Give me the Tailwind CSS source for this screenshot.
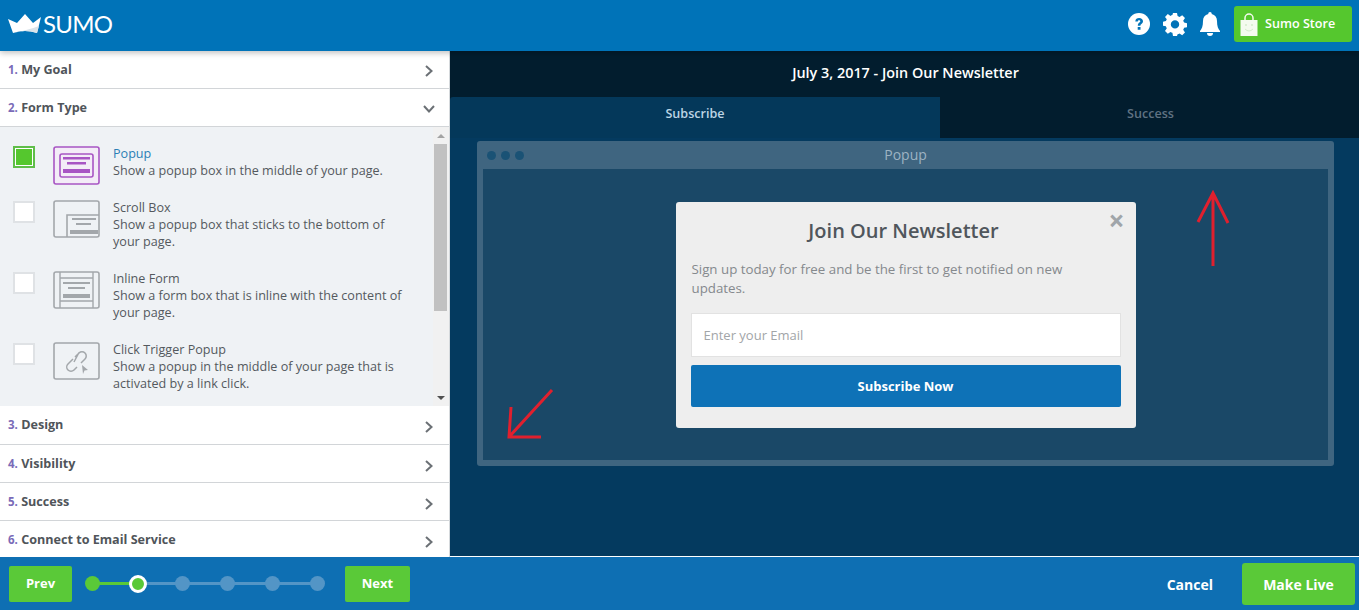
<!DOCTYPE html>
<html lang="en">
<head>
  <meta charset="UTF-8" />
  <title>Sumo - Form Type</title>
  <script src="https://cdn.jsdelivr.net/npm/@tailwindcss/browser@4"></script>
</head>
<body class="w-[1359px] h-[611px] overflow-hidden bg-white font-['Open_Sans',sans-serif]">

  <!-- Header -->
  <header class="relative z-10 h-[51px] bg-[#0073b8] flex items-center justify-between shadow-[0_2px_6px_rgba(0,0,0,0.25)]">
    <div class="flex items-center pl-[8px] -mt-[3px]">
      <svg width="34" height="20" viewBox="0 0 34 20">
        <path d="M0 5 L9 9 L17 0 L25 9 L33 3 L29 19 Q17 15 5 19 Z" fill="#ffffff"/>
        <path d="M5 19 Q17 15 29 19 L31 12 Q20 16 5 19 Z" fill="#d9e3ea"/>
      </svg>
      <span class="ml-[1px] text-[24px] leading-none text-white tracking-[-0.7px] font-['Lato',sans-serif]">SUMO</span>
    </div>
    <div class="flex items-center pr-[7px] -mt-[3px]">
      <svg width="24" height="24" viewBox="0 0 24 24" class="mr-[12px]">
        <circle cx="12" cy="12" r="11" fill="#fff"/>
        <path d="M8.3 9.4 C8.5 7 10 6 12.1 6 C14.4 6 16 7.3 16 9.2 C16 11.6 13.4 11.8 13.4 13.8 L10.8 13.8 C10.8 10.8 13.3 10.6 13.3 9.3 C13.3 8.6 12.8 8.2 12.1 8.2 C11.3 8.2 10.9 8.7 10.8 9.6 Z M10.7 15 H13.5 V17.8 H10.7 Z" fill="#0073b8"/>
      </svg>
      <svg width="24" height="24" viewBox="0 0 24 24" class="mr-[12px]">
        <path fill="#fff" fill-rule="evenodd" d="M10 1 h4 l.6 3.1 c.7.2 1.3.5 1.9.9 l2.7-1.8 2.8 2.8-1.8 2.7c.4.6.7 1.2.9 1.9 l3 .6 v4 l-3 .6c-.2.7-.5 1.3-.9 1.9 l1.8 2.7-2.8 2.8-2.7-1.8c-.6.4-1.2.7-1.9.9 L14 23.9 h-4 l-.6-3.1c-.7-.2-1.3-.5-1.9-.9 l-2.7 1.8-2.8-2.8 1.8-2.7c-.4-.6-.7-1.2-.9-1.9 l-3-.6 v-4 l3-.6c.2-.7.5-1.3.9-1.9 L2 4.9 4.8 2.1 7.5 3.9c.6-.4 1.2-.7 1.9-.9 Z M12 8.2 a4.2 4.2 0 1 0 0 8.4 a4.2 4.2 0 0 0 0-8.4 Z"/>
      </svg>
      <svg width="22" height="24" viewBox="0 0 22 24" class="mr-[13px]">
        <path fill="#fff" d="M11 0 a1.7 1.7 0 0 1 1.7 1.9 C16.2 2.7 18 5.4 18 9 c0 5.2 1.2 8 3 10 v1 H1 v-1 c1.8-2 3-4.8 3-10 0-3.6 1.8-6.3 5.3-7.1 A1.7 1.7 0 0 1 11 0 Z M8 21 h6 a3 3 0 0 1-6 0 Z"/>
      </svg>
      <button class="w-[118px] h-[36px] bg-[#55c72e] rounded-[3px] flex items-center pl-[6px] text-white text-[12.6px] font-semibold">
        <svg width="18" height="24" viewBox="0 0 18 24" class="mr-[7px] mt-[2px]">
          <path d="M5 8 V5 a4 4 0 0 1 8 0 V8" fill="none" stroke="#f4fbef" stroke-width="1.5"/>
          <path d="M0.5 7 H17.5 V23 H0.5 Z" fill="#f4fbef"/>
          <circle cx="6" cy="12" r="1" fill="#d5eccb"/><circle cx="12" cy="12" r="1" fill="#d5eccb"/>
          <path d="M5 16 Q9 20 13 16" fill="none" stroke="#d5eccb" stroke-width="1"/>
        </svg>
        Sumo Store
      </button>
    </div>
  </header>

  <div class="flex h-[506px]">
    <!-- Sidebar -->
    <aside class="w-[450px] shrink-0 bg-white border-r border-[#d5d9dc] text-[#50555a]">
      <div class="h-[38px] border-b border-[#d2d5d8] flex items-center justify-between pl-[8px] pr-[15px]">
        <span class="text-[12.6px] font-bold mt-[1px]"><span class="text-[#7a6bb8] text-[11.5px]">1.</span> My Goal</span>
        <svg width="10" height="14" viewBox="0 0 10 14" class="mt-[3px]"><path d="M2 2 L7.5 7 L2 12" fill="none" stroke="#6b7075" stroke-width="2"/></svg>
      </div>
      <div class="h-[38px] border-b border-[#d2d5d8] flex items-center justify-between pl-[8px] pr-[13px]">
        <span class="text-[12.6px] font-bold mt-[1px]"><span class="text-[#7a6bb8] text-[11.5px]">2.</span> Form Type</span>
        <svg width="14" height="10" viewBox="0 0 14 10" class="mt-[3px]"><path d="M2 2 L7 7.5 L12 2" fill="none" stroke="#6b7075" stroke-width="2"/></svg>
      </div>

      <!-- Form type list -->
      <div class="relative h-[279px] bg-[#eff2f5] text-[12.6px] leading-[17px] text-[#54595e]">
        <div class="flex h-[54px] pt-[19px] box-content">
          <div class="ml-[13px] w-[22px] h-[22px] border-2 border-[#5fbe49] bg-[#55c72e] outline outline-1 -outline-offset-[3px] outline-white"></div>
          <svg width="48" height="40" viewBox="0 0 48 40" class="ml-[18px]">
            <rect x="1" y="1" width="45" height="37" rx="2" fill="#f3ecf7" stroke="#a855c4" stroke-width="1.6"/>
            <rect x="7" y="8" width="33" height="23" rx="2" fill="none" stroke="#a855c4" stroke-width="1.6"/>
            <rect x="10" y="11" width="27" height="2.5" fill="#a855c4"/><rect x="14" y="16" width="19" height="2.5" fill="#a855c4"/><rect x="10" y="23" width="27" height="4" fill="#a855c4"/>
          </svg>
          <div class="ml-[12px] -mt-[1px]"><p class="text-[#2b7fb5]">Popup</p><p>Show a popup box in the middle of your page.</p></div>
        </div>
        <div class="flex mt-0 h-[71px]">
          <div class="ml-[13px] mt-[1px] w-[22px] h-[22px] border-2 border-[#dfe2e5] bg-white"></div>
          <svg width="48" height="40" viewBox="0 0 48 40" class="ml-[18px]">
            <rect x="1" y="1" width="45" height="36" rx="2" fill="none" stroke="#a3a7ab" stroke-width="1.6"/>
            <path d="M14 37 V15 H46" fill="none" stroke="#a3a7ab" stroke-width="1.6"/>
            <rect x="19" y="18" width="24" height="2" fill="#a3a7ab"/><rect x="23" y="23" width="15" height="2" fill="#a3a7ab"/><rect x="17" y="30" width="28" height="4" fill="#a3a7ab"/>
          </svg>
          <div class="ml-[12px] w-[292px] -mt-[1px]"><p>Scroll Box</p><p>Show a popup box that sticks to the bottom of your page.</p></div>
        </div>
        <div class="flex h-[71px]">
          <div class="ml-[13px] mt-[1px] w-[22px] h-[22px] border-2 border-[#dfe2e5] bg-white"></div>
          <svg width="48" height="40" viewBox="0 0 48 40" class="ml-[18px]">
            <rect x="1" y="1" width="45" height="36" rx="2" fill="none" stroke="#a3a7ab" stroke-width="1.6"/>
            <path d="M7 1 V37 M40 1 V37 M7 7 H40 M7 30 H40" fill="none" stroke="#a3a7ab" stroke-width="1.4"/>
            <rect x="10" y="11" width="27" height="2" fill="#a3a7ab"/><rect x="15" y="16" width="17" height="2" fill="#a3a7ab"/><rect x="10" y="23" width="27" height="4" fill="#a3a7ab"/>
          </svg>
          <div class="ml-[12px] w-[292px] -mt-[1px]"><p>Inline Form</p><p>Show a form box that is inline with the content of your page.</p></div>
        </div>
        <div class="flex h-[63px]">
          <div class="ml-[13px] mt-[1px] w-[22px] h-[22px] border-2 border-[#dfe2e5] bg-white"></div>
          <svg width="48" height="40" viewBox="0 0 48 40" class="ml-[18px]">
            <rect x="1" y="1" width="45" height="36" rx="2" fill="none" stroke="#a3a7ab" stroke-width="1.6"/>
            <path d="M20 17 L15 22 a4 4 0 0 0 6 6 l3-3 M21 20 L26 10.5 M22 15 l4-4 a4 4 0 0 1 6 6 l-4 4" fill="none" stroke="#a3a7ab" stroke-width="1.5"/>
            <path d="M29 23 L35 28 L31.5 28.5 L30 32 Z" fill="#a3a7ab"/>
          </svg>
          <div class="ml-[12px] w-[292px] -mt-[1px]"><p>Click Trigger Popup</p><p>Show a popup in the middle of your page that is activated by a link click.</p></div>
        </div>

        <!-- Scrollbar -->
        <div class="absolute right-0 top-0 w-[16px] h-full bg-[#f1f1f1]">
          <div class="mx-auto mt-[7px] w-0 h-0 border-x-[4px] border-x-transparent border-b-[4px] border-b-[#a3a3a3]"></div>
          <div class="absolute left-[1px] top-[17px] w-[13px] h-[167px] bg-[#c1c1c1]"></div>
          <div class="absolute left-[4px] bottom-[6px] w-0 h-0 border-x-[4px] border-x-transparent border-t-[4px] border-t-[#505050]"></div>
        </div>
      </div>

      <div class="h-[39px] border-b border-[#d2d5d8] flex items-center justify-between pl-[8px] pr-[15px]">
        <span class="text-[12.6px] font-bold"><span class="text-[#7a6bb8] text-[11.5px]">3.</span> Design</span>
        <svg width="10" height="14" viewBox="0 0 10 14" class="mt-[3px]"><path d="M2 2 L7.5 7 L2 12" fill="none" stroke="#6b7075" stroke-width="2"/></svg>
      </div>
      <div class="h-[38px] border-b border-[#d2d5d8] flex items-center justify-between pl-[8px] pr-[15px]">
        <span class="text-[12.6px] font-bold mt-[1px]"><span class="text-[#7a6bb8] text-[11.5px]">4.</span> Visibility</span>
        <svg width="10" height="14" viewBox="0 0 10 14" class="mt-[4px]"><path d="M2 2 L7.5 7 L2 12" fill="none" stroke="#6b7075" stroke-width="2"/></svg>
      </div>
      <div class="h-[38px] border-b border-[#d2d5d8] flex items-center justify-between pl-[8px] pr-[15px]">
        <span class="text-[12.6px] font-bold mt-[1px]"><span class="text-[#7a6bb8] text-[11.5px]">5.</span> Success</span>
        <svg width="10" height="14" viewBox="0 0 10 14" class="mt-[4px]"><path d="M2 2 L7.5 7 L2 12" fill="none" stroke="#6b7075" stroke-width="2"/></svg>
      </div>
      <div class="h-[37px] flex items-center justify-between pl-[8px] pr-[15px]">
        <span class="text-[12.6px] font-bold mt-[1px]"><span class="text-[#7a6bb8] text-[11.5px]">6.</span> Connect to Email Service</span>
        <svg width="10" height="14" viewBox="0 0 10 14" class="mt-[4px]"><path d="M2 2 L7.5 7 L2 12" fill="none" stroke="#6b7075" stroke-width="2"/></svg>
      </div>
    </aside>

    <!-- Preview -->
    <main class="flex-1 flex flex-col bg-[#043a5f] border-b border-white">
      <div class="h-[46px] bg-[#021d2e] flex items-center justify-center text-white text-[14.4px] font-semibold pb-[3px] pl-[2px]">July 3, 2017 - Join Our Newsletter</div>
      <div class="flex h-[41px] bg-[#021d2e] text-[12.6px] font-semibold">
        <div class="w-[490px] bg-[#04385a] rounded-tl-[3px] flex items-center justify-center text-[#bcd4e4] pb-[7px]">Subscribe</div>
        <div class="flex-1 flex items-center justify-center text-[#5f7282] pb-[7px] pl-[2px]">Success</div>
      </div>
      <div class="relative flex-1 pt-[3px] pl-[27px]">
        <div class="w-[857px] h-[325px] bg-[#3f6580] rounded-[3px] px-[6px] pb-[6px] flex flex-col">
          <div class="relative h-[28px] flex items-center text-[14px] text-[#9db3c3]">
            <div class="flex gap-[5px] ml-[4px]">
              <span class="w-[9px] h-[9px] rounded-full bg-[#1a5275]"></span>
              <span class="w-[9px] h-[9px] rounded-full bg-[#1a5275]"></span>
              <span class="w-[9px] h-[9px] rounded-full bg-[#1a5275]"></span>
            </div>
            <span class="absolute left-0 right-0 text-center -mt-[1px]">Popup</span>
          </div>
          <div class="flex-1 bg-[#1a4867] flex justify-center pt-[33px]">
            <div class="relative w-[460px] h-[226px] bg-[#eeeeee] rounded-[3px] px-[15px] pt-[15px]">
              <span class="absolute right-[11px] top-[3px] text-[28px] leading-[30px] font-bold text-[#a0a5a9]">×</span>
              <h2 class="text-center text-[20px] leading-[28px] font-semibold text-[#50565c] -ml-[4px]">Join Our Newsletter</h2>
              <p class="mt-[15px] pr-[20px] pl-[1px] text-[13.3px] leading-[19px] text-[#85898d]">Sign up today for free and be the first to get notified on new updates.</p>
              <div class="mt-[15px] h-[44px] bg-white border border-[#e2e2e2] flex items-center pl-[12px] pt-[2px] text-[13px] text-[#a2a5a8]">Enter your Email</div>
              <div class="mt-[8px] h-[42px] bg-[#0e72b7] rounded-[2px] flex items-center justify-center pt-[2px] text-white text-[13px] font-bold">Subscribe Now</div>
            </div>
          </div>
        </div>
        <!-- Red annotation arrows -->
        <svg width="34" height="78" viewBox="0 0 34 78" class="absolute left-[746px] top-[52px]">
          <path d="M17 76 V3 M2 32 L17 3 L32 33" fill="none" stroke="#e0202e" stroke-width="3"/>
        </svg>
        <svg width="50" height="52" viewBox="0 0 50 52" class="absolute left-[56px] top-[250px]">
          <path d="M46 2 L3 49 M5 19 L3 49 H35" fill="none" stroke="#e0202e" stroke-width="3"/>
        </svg>
      </div>
    </main>
  </div>

  <!-- Footer -->
  <footer class="h-[53px] bg-[#0e6fb3] flex items-center justify-between">
    <div class="flex items-center">
      <button class="ml-[9px] w-[63px] h-[36px] bg-[#5ac938] rounded-[2px] text-white text-[13px] font-bold">Prev</button>
      <div class="relative ml-[13px] w-[240px] h-[20px] flex items-center gap-[30px]">
        <div class="absolute left-[8px] right-[8px] h-[3px] bg-[#5395c6]"></div>
        <div class="absolute left-[8px] w-[44px] h-[3px] bg-[#5ac938]"></div>
        <span class="relative w-[15px] h-[15px] rounded-full bg-[#5ac938]"></span>
        <span class="relative w-[18px] h-[18px] -mx-[1.5px] rounded-full bg-[#5ac938] border-[3px] border-white"></span>
        <span class="relative w-[15px] h-[15px] rounded-full bg-[#5395c6]"></span>
        <span class="relative w-[15px] h-[15px] rounded-full bg-[#5395c6]"></span>
        <span class="relative w-[15px] h-[15px] rounded-full bg-[#5395c6]"></span>
        <span class="relative w-[15px] h-[15px] rounded-full bg-[#5395c6]"></span>
      </div>
      <button class="ml-[20px] w-[65px] h-[36px] bg-[#5ac938] rounded-[2px] text-white text-[13px] font-bold">Next</button>
    </div>
    <div class="flex items-center pr-[4px]">
      <span class="text-white text-[14px] font-bold mr-[29px] mt-[2px]">Cancel</span>
      <button class="w-[113px] h-[42px] bg-[#5ac938] rounded-[3px] text-white text-[14px] font-bold pt-[2px]">Make Live</button>
    </div>
  </footer>
</body>
</html>
